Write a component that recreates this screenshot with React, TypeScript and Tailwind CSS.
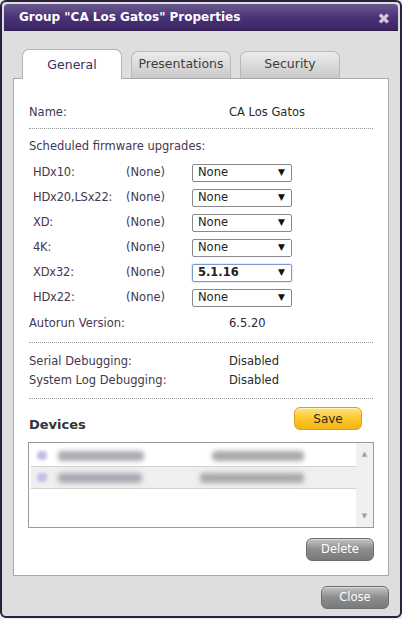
import React from 'react';

const firmware = [
  { model: 'HDx10:', current: '(None)', pick: 'None' },
  { model: 'HDx20,LSx22:', current: '(None)', pick: 'None' },
  { model: 'XD:', current: '(None)', pick: 'None' },
  { model: '4K:', current: '(None)', pick: 'None' },
  { model: 'XDx32:', current: '(None)', pick: '5.1.16', active: true },
  { model: 'HDx22:', current: '(None)', pick: 'None' },
];

const Divider = ({ className = '' }: { className?: string }) => (
  <div className={`border-t border-dotted border-[#9a9a9a] mr-[1px] ${className}`} />
);

const Select = ({ value, active }: { value: string; active?: boolean }) => (
  <div
    className={`w-[100px] h-[18px] flex items-center justify-between pl-[5px] pr-[6px] rounded-[2px] bg-white border ${
      active ? 'border-[#7b9ad0] shadow-[0_0_2px_#9bb5e0] font-bold' : 'border-[#8a8a8a]'
    }`}
  >
    <span className="text-[#222]">{value}</span>
    <span className="text-[9px] text-[#111]">▼</span>
  </div>
);

const Tab = ({ label, active }: { label: string; active?: boolean }) =>
  active ? (
    <div className="w-[100px] h-[30px] -mb-px relative z-10 flex items-center justify-center rounded-t-[7px] bg-white border border-b-0 border-[#b4b4b4] text-[12.5px] text-[#3c2d5a] pt-[2px]">
      {label}
    </div>
  ) : (
    <div className="w-[100px] h-[27px] flex items-center justify-center rounded-t-[7px] border border-b-0 border-[#b9b9b9] bg-gradient-to-b from-[#ececec] to-[#c9c9c9] text-[12.5px] text-[#3d3d3d] pb-[1px]">
      {label}
    </div>
  );

const GreyButton = ({ label }: { label: string }) => (
  <div className="w-[68px] h-[23px] flex items-center justify-center rounded-[6px] border border-[#6e6e6e] bg-gradient-to-b from-[#c4c4c4] via-[#8c8c8c] to-[#7a7a7a] text-white text-[11.5px] shadow-[inset_0_1px_0_#d8d8d8]">
    {label}
  </div>
);

// blurred placeholder for a device entry
const DeviceRow = ({ shade, a, b }: { shade?: boolean; a: number; b: number }) => (
  <div className={`h-[22px] flex items-center border-b border-[#d2d2d2] ${shade ? 'bg-[#efefef]' : 'bg-white'}`}>
    <div className="w-[10px] h-[9px] ml-[6px] bg-[#c4bfe6] blur-[1.5px] rounded-sm" />
    <div className="ml-[11px] h-[10px] bg-[#aaa8b2] blur-[2.5px] rounded-sm" style={{ width: a }} />
    <div className="ml-auto mr-[52px] h-[10px] bg-[#a8a8a8] blur-[2.5px] rounded-sm" style={{ width: b }} />
  </div>
);

export default function App() {
  return (
    <div
      className="w-[402px] h-[619px] bg-[#ecebef] text-[11.5px] text-[#45384f]"
      style={{ fontFamily: '"DejaVu Sans", Verdana, sans-serif' }}
    >
      <div className="h-[618px] rounded-[6px] border-2 border-[#2b2040] bg-[#dedede] p-[2px] flex flex-col">
        {/* title bar */}
        <div className="h-[27px] flex items-center justify-between pl-[15px] pr-[8px] rounded-t-[4px] bg-gradient-to-b from-[#6a5a8c] via-[#4b3378] to-[#3c2565] border-b border-[#2b1d48]">
          <span className="text-white font-bold text-[12px]">Group "CA Los Gatos" Properties</span>
          <span className="text-[#cfc8dc] font-bold text-[15px] leading-none mt-[4px]">✖</span>
        </div>

        {/* tabs */}
        <div className="flex items-end gap-[9px] pl-[18px] mt-[18px]">
          <Tab label="General" active />
          <Tab label="Presentations" />
          <Tab label="Security" />
        </div>

        <div className="mx-[9px] h-[498px] bg-white border border-[#a9a9a9] pl-[15px] pr-[14px] pt-[25px] flex flex-col">
          <div className="h-[18px] flex items-center">
            <span className="w-[200px]">Name:</span>
            <span className="text-[#2a2a2a]">CA Los Gatos</span>
          </div>
          <Divider className="mt-[6px]" />
          <div className="h-[18px] flex items-center mt-[9px]">Scheduled firmware upgrades:</div>
          <div className="mt-[4px]">
            {firmware.map((f) => (
              <div key={f.model} className="h-[25px] flex items-center pl-[4px]">
                <span className="w-[93px] tracking-[-0.2px]">{f.model}</span>
                <span className="w-[66px]">{f.current}</span>
                <Select value={f.pick} active={f.active} />
              </div>
            ))}
          </div>
          <div className="h-[18px] flex items-center mt-[5px]">
            <span className="w-[200px]">Autorun Version:</span>
            <span className="text-[#2a2a2a]">6.5.20</span>
          </div>
          <Divider className="mt-[9px]" />
          <div className="mt-[9px]">
            <div className="h-[19px] flex items-center">
              <span className="w-[200px]">Serial Debugging:</span>
              <span className="text-[#2a2a2a]">Disabled</span>
            </div>
            <div className="h-[19px] flex items-center">
              <span className="w-[200px]">System Log Debugging:</span>
              <span className="text-[#2a2a2a]">Disabled</span>
            </div>
          </div>
          <Divider className="mt-[8px]" />

          {/* devices */}
          <div className="h-[23px] mt-[8px] flex items-end justify-between">
            <span className="font-bold text-[13px] text-[#333] leading-none mb-[-1px]">Devices</span>
            <div className="w-[68px] h-[23px] mr-[12px] flex items-center justify-center rounded-[6px] border border-[#d9a21a] bg-gradient-to-b from-[#ffe47a] via-[#fcc72a] to-[#f3b512] text-[12px] text-[#2a2a2a] shadow-[inset_0_1px_0_#fff3b8]">
              Save
            </div>
          </div>
          <div className="mt-[12px] -ml-[1px] h-[86px] border border-[#9a9a9a] flex">
            <div className="flex-1 pt-[2px] pl-[2px]">
              <DeviceRow a={86} b={92} />
              <DeviceRow shade a={84} b={104} />
            </div>
            <div className="w-[17px] bg-[#f0f0f0] flex flex-col items-center justify-between py-[6px] text-[7px] text-[#a0a0a0]">
              <span>▲</span>
              <span>▼</span>
            </div>
          </div>
          <div className="flex justify-end mt-[10px]">
            <GreyButton label="Delete" />
          </div>
        </div>

        <div className="flex justify-end mt-[10px] mr-[9px]">
          <GreyButton label="Close" />
        </div>
      </div>
    </div>
  );
}
